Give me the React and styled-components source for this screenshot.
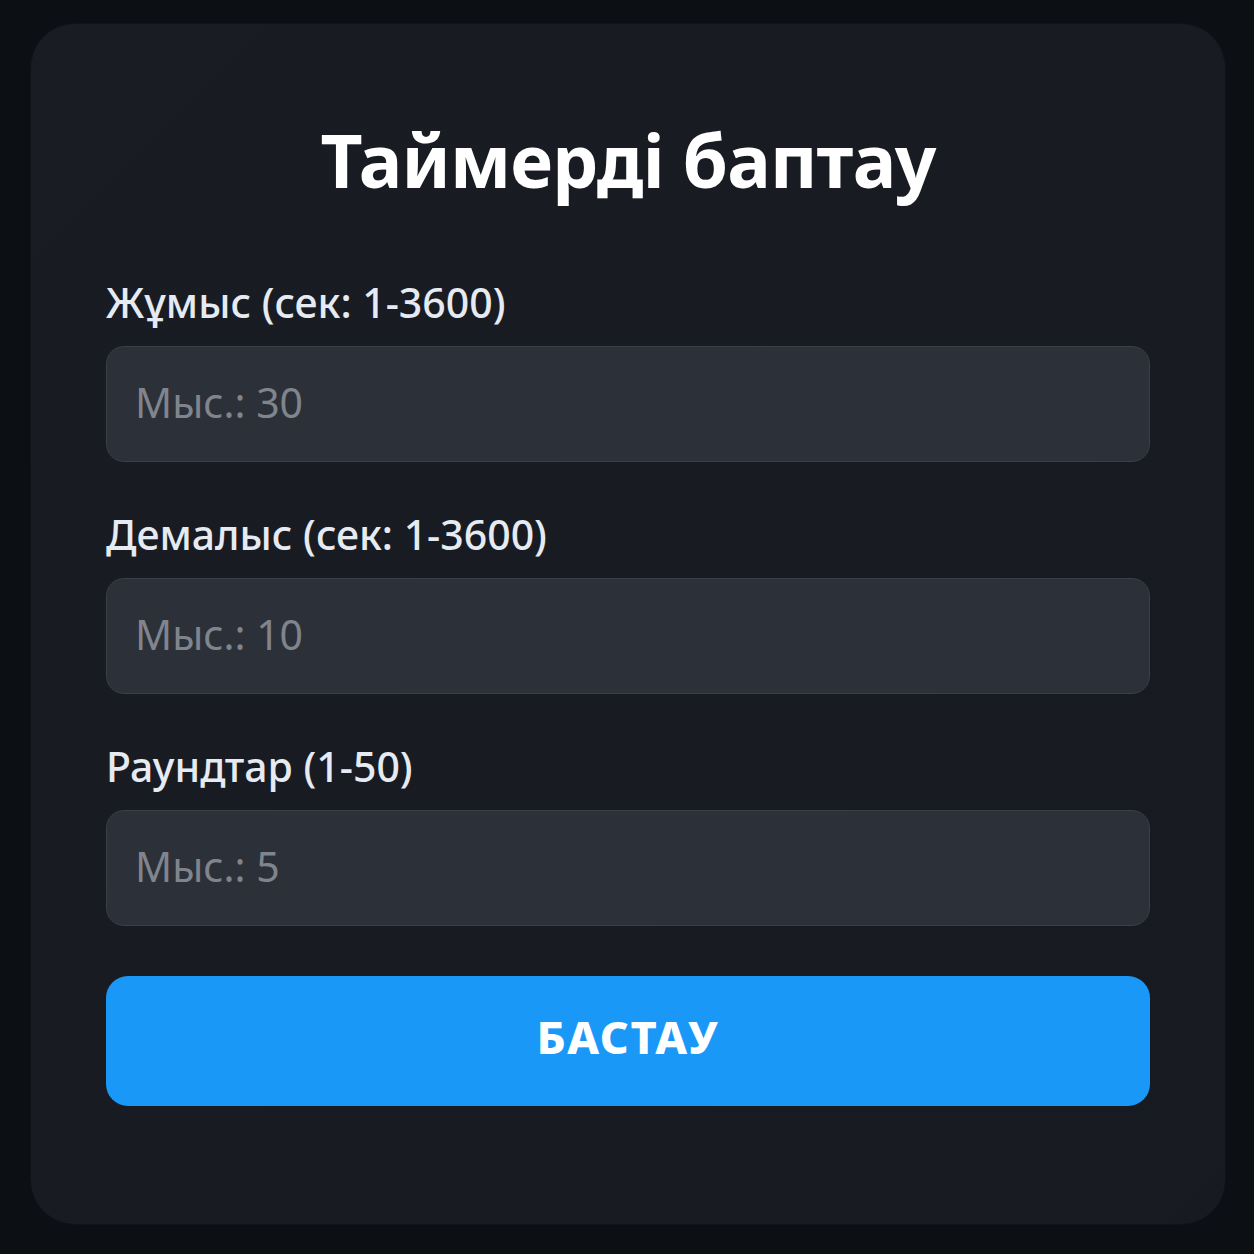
import React from "react";
import styled, { createGlobalStyle } from "styled-components";

const GlobalStyle = createGlobalStyle`
   html, body {
      margin: 0;
      padding: 0;
      background: #0c0f13;
   }
   body {
      font-family: "Noto Sans", "Open Sans", sans-serif;
      -webkit-font-smoothing: antialiased;
   }
   * {
      box-sizing: border-box;
   }
`;

const fields = [
   { id: "work", label: "Жұмыс (сек: 1-3600)", placeholder: "Мыс.: 30" },
   { id: "rest", label: "Демалыс (сек: 1-3600)", placeholder: "Мыс.: 10" },
   { id: "rounds", label: "Раундтар (1-50)", placeholder: "Мыс.: 5" },
];

const App = () => {
   return (
      <>
         <GlobalStyle />
         <Page>
            <Card>
               <Title>Таймерді баптау</Title>
               <Form onSubmit={(e) => e.preventDefault()}>
                  {fields.map((f) => (
                     <Field key={f.id}>
                        <Label htmlFor={f.id}>{f.label}</Label>
                        <Input id={f.id} type='number' placeholder={f.placeholder} />
                     </Field>
                  ))}
                  <StartButton type='submit'>БАСТАУ</StartButton>
               </Form>
            </Card>
         </Page>
      </>
   );
};

export default App;

const Page = styled.div`
   width: 1254px;
   height: 1254px;
   padding: 24px 29px 30px 31px;
   background: #0c0f13;
`;

const Card = styled.div`
   height: 100%;
   background: linear-gradient(135deg, #191d23 0%, #171b21 100%);
   border-radius: 44px;
   padding: 94px 75px 0 75px;
   box-shadow: 0 0 0 1px rgba(255, 255, 255, 0.02);
`;

const Title = styled.h1`
   margin: 0;
   text-align: center;
   color: #ffffff;
   font-size: 73px;
   font-weight: 700;
   line-height: 84px;
   letter-spacing: -0.8px;
`;

const Form = styled.form`
   display: flex;
   flex-direction: column;
   gap: 48px;
   margin-top: 76px;
`;

const Field = styled.div`
   display: flex;
   flex-direction: column;
   gap: 20px;
`;

const Label = styled.label`
   color: #e6eaf2;
   font-size: 41px;
   font-weight: 500;
   line-height: 48px;
`;

const Input = styled.input`
   width: 100%;
   height: 116px;
   padding: 0 28px 5px 28px;
   background: #2c3139;
   border: 1.5px solid #3a3f47;
   border-radius: 18px;
   color: #e6eaf2;
   font-family: inherit;
   font-size: 41px;
   outline: none;
   appearance: textfield;

   &::placeholder {
      color: #80858d;
   }
   &::-webkit-outer-spin-button,
   &::-webkit-inner-spin-button {
      -webkit-appearance: none;
      margin: 0;
   }
`;

const StartButton = styled.button`
   height: 130px;
   margin-top: 2px;
   padding: 0 0 9px 0;
   border: none;
   border-radius: 22px;
   background: #1a98f8;
   color: #ffffff;
   font-family: inherit;
   font-size: 45px;
   font-weight: 800;
   letter-spacing: 1.6px;
   cursor: pointer;
`;
